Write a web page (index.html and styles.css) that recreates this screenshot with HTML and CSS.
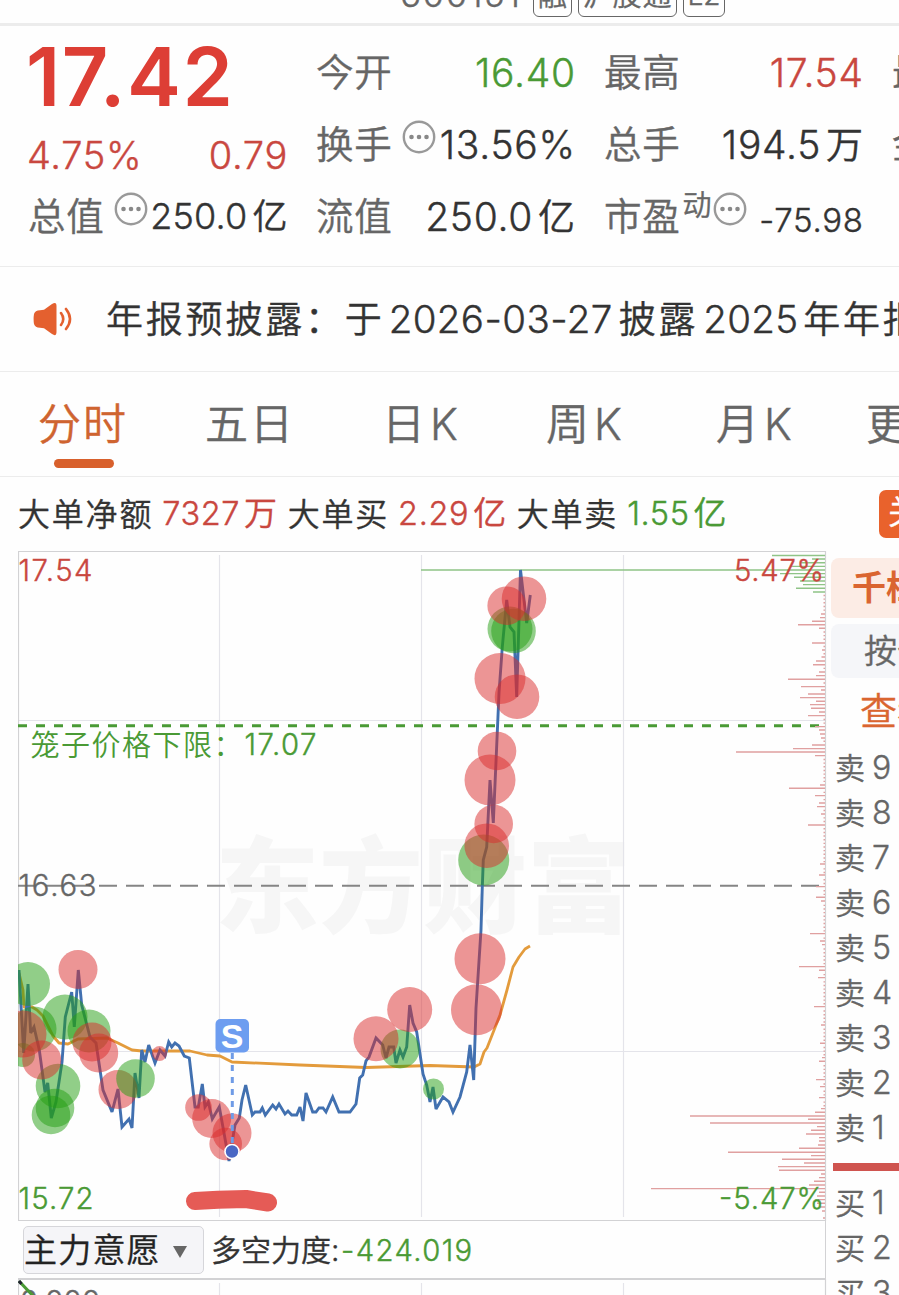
FILE: index.html
```html
<!DOCTYPE html>
<html lang="zh-CN">
<head>
<meta charset="utf-8">
<title>行情</title>
<link rel="stylesheet" href="styles.css">
</head>
<body>
<div class="screen">
  <header class="topbar">
    <span class="code">600151</span>
    <span class="tag">融</span>
    <span class="tag">沪股通</span>
    <span class="tag tag-l2">L2</span>
  </header>

  <section class="quote">
    <div class="col">
      <div class="price">17.42</div>
      <div class="change"><span>4.75%</span><span>0.79</span></div>
      <div class="cell small"><span class="label">总值</span><svg class="info" viewBox="0 0 34 34"><circle cx="17" cy="17" r="15.2"/><path d="M9.500 17h.01M17 17h.01M24.500 17h.01"/></svg><span class="value">250.0<i>亿</i></span></div>
    </div>
    <div class="col">
      <div class="cell"><span class="label">今开</span><span class="value green">16.40</span></div>
      <div class="cell"><span class="label">换手</span><svg class="info" viewBox="0 0 34 34"><circle cx="17" cy="17" r="15.2"/><path d="M9.500 17h.01M17 17h.01M24.500 17h.01"/></svg><span class="value">13.56%</span></div>
      <div class="cell"><span class="label">流值</span><span class="value">250.0<i>亿</i></span></div>
    </div>
    <div class="col">
      <div class="cell"><span class="label">最高</span><span class="value red">17.54</span></div>
      <div class="cell"><span class="label">总手</span><span class="value">194.5<i>万</i></span></div>
      <div class="cell pe"><span class="label">市盈</span><span class="sup">动</span><svg class="info" viewBox="0 0 34 34"><circle cx="17" cy="17" r="15.2"/><path d="M9.500 17h.01M17 17h.01M24.500 17h.01"/></svg><span class="value">-75.98</span></div>
    </div>
    <div class="col">
      <div class="cell"><span class="label">最低</span></div>
      <div class="cell"><span class="label">金额</span></div>
    </div>
  </section>

  <section class="notice">
    <svg class="horn" viewBox="0 0 40 34"><path class="body" d="M1 12q1-3.500 6-3.800l4-.4 8-5.800q4.500-3 4.500 2v26q0 5-4.500 2l-8-5.800-4-.4q-5-.3-6-3.800-.8-5 0-10z"/><path class="wave" d="M28 11q4.500 6 0 12M33 7q8 10 0 20"/></svg>
    <p><b>年报预披露：</b><b class="gap">于</b><span class="date">2026-03-27</span><b>披露</b><span class="year">2025</span><b>年年报</b></p>
  </section>

  <nav class="tabs">
    <a class="on">分时</a><a>五日</a><a>日<em>K</em></a><a>周<em>K</em></a><a>月<em>K</em></a><a>更多</a>
  </nav>

  <section class="orders">
    <b>大单净额</b><span class="red">7327<i>万</i></span><b>大单买</b><span class="red">2.29<i>亿</i></span><b>大单卖</b><span class="green">1.55<i>亿</i></span>
    <div class="close-btn">关</div>
  </section>

  <main class="market">
    <div class="charts">
      <svg class="chart" viewBox="18 551 809 670">
        <text class="mark" x="215" y="925" textLength="416">东方财富</text>
        <path class="grid" d="M219.500 555V1217M421.500 555V1217M623.500 555V1217M19 720.500H825M19 1051.500H825"/>
        <path class="frame" d="M825.500 551.500H18.500V1220.500H825.500V551"/>
        <path class="limit" d="M18 725.800H820"/>
        <path class="base" d="M18 885.800H820"/>
        <g class="bars" id="bars"></g>
        <path class="avg" d="M19 973L23 990L24 1007L32 1007L37 1010L43 1016L53 1036L59 1043L68 1044L78 1039L107 1038L118 1043L132 1050L142 1051L190 1051L207 1055L220 1056L232 1062L300 1065L366 1067.500L430 1065.500L474 1067L480 1064L484 1052L487 1048L500 1015L507 990L513 967L519 957L525 949L530 946"/>
        <path class="line" d="M19 970L23.700 1053L28 984L30.700 1033L34 1027L39.300 1050L45 1092L47.700 1083L51.300 1118L56 1102L62 1062L65.300 1017L71.700 992L74.300 1027L78.300 970L81.700 1005L90 1037L96 1043L103 1090L112 1112L118 1089L122 1127L129 1119L132 1128L135 1073L139 1098L141.700 1050L145 1062L148.700 1045L155 1063L160 1050L165 1056L168.700 1042L171.700 1047L175 1043L179 1046L184.300 1056L189.300 1058L195 1107L198.300 1107L202.300 1084L205 1107L208.300 1102L212.300 1119L219.300 1107L224 1133L229 1161L235 1125L239.300 1118L242 1100L245.700 1085L252.300 1115L255 1112L260 1112L262.300 1108L265.300 1115L272.700 1105L276 1109L279 1104L285 1114L288 1111L291.700 1115L296.700 1115L300 1107L303 1121L306 1093L312.700 1112L316 1112L319 1108L323 1108L326 1112L332.700 1097L339 1112L350 1112L356 1104L359.700 1078L362.700 1075L366 1061L369 1057L376 1038L382.700 1045L386 1058L389 1047L393.700 1047L396 1063L400 1050L403 1057L406.700 1047L409.700 1005L413 1023L416.700 1032L423 1074L426.700 1085L430 1102L433 1087L436 1109L443 1097L449 1102L453 1112L460 1097L466.700 1072L470 1045L473.700 1080L476 1008L481 930L482.300 887L483.300 860L486.700 847L490 780L493.300 823L497.300 732L499 693L502.300 647L506.700 600L510 627L514 632L516.700 697L520.500 570L526.700 623L530.300 595"/>
        <g class="g">
          <circle cx="28" cy="984" r="22"/><circle cx="65" cy="1017" r="22.500"/><circle cx="89" cy="1031" r="21.500"/><circle cx="34" cy="1029" r="22.500"/><circle cx="23" cy="1055" r="12"/><circle cx="58" cy="1086" r="22.300"/><circle cx="55" cy="1108" r="19.300"/><circle cx="51" cy="1115" r="19.300"/><circle cx="400" cy="1049" r="19.500"/><circle cx="433.500" cy="1089" r="10.500"/><circle cx="510" cy="629" r="22.500"/><circle cx="513.500" cy="631" r="22.300"/><circle cx="483.700" cy="860" r="25.500"/>
        </g>
        <g class="r">
          <circle cx="78" cy="969.500" r="19.500"/><circle cx="23" cy="1034" r="23.500"/><circle cx="41.700" cy="1060" r="19.500"/><circle cx="92" cy="1042" r="19.500"/><circle cx="98.700" cy="1053" r="19.500"/><circle cx="118" cy="1089.500" r="19.500"/><circle cx="159.500" cy="1053.500" r="7.500"/><circle cx="198.500" cy="1107.500" r="13.300"/><circle cx="211.700" cy="1118.500" r="19.500"/><circle cx="232" cy="1133" r="19.500"/><circle cx="225.700" cy="1144" r="16.300"/><circle cx="376" cy="1038.700" r="22.500"/><circle cx="409.700" cy="1009.500" r="22.500"/><circle cx="480" cy="958.700" r="25.500"/><circle cx="476.500" cy="1009.700" r="25.500"/><circle cx="506.700" cy="605.700" r="19.300"/><circle cx="524" cy="598.700" r="22.300"/><circle cx="500" cy="678.500" r="25.500"/><circle cx="517" cy="696.700" r="22.300"/><circle cx="497" cy="751" r="19.300"/><circle cx="490" cy="780" r="25.500"/><circle cx="493.700" cy="824" r="19.300"/><circle cx="486.700" cy="845.700" r="22.300"/>
        </g>
        <g class="g"><circle cx="135.500" cy="1078.500" r="19.300"/></g>
        <path class="drop" d="M232.300 1053V1144"/>
        <circle class="dot" cx="232" cy="1151.500" r="7"/>
        <rect class="badge" x="215.500" y="1019" width="33.500" height="33.500" rx="5"/>
        <text class="s" x="232.200" y="1048" text-anchor="middle">S</text>
        <path class="stroke" d="M195 1201L218 1199.700L246 1199L268 1202.500"/>
        <text class="lab red" x="18.500" y="581" textLength="74">17.54</text>
        <text class="lab gray" x="18.500" y="895.500" textLength="78">16.63</text>
        <text class="lab green" x="18.500" y="1209" textLength="75">15.72</text>
        <text class="lab red" x="734" y="581" textLength="90">5.47%</text>
        <text class="lab green" x="719" y="1209" textLength="105">-5.47%</text>
        <text class="cn green" x="30.500" y="755.500" textLength="212">笼子价格下限：</text>
        <text class="lab green" x="244.500" y="755" textLength="72">17.07</text>
      </svg>
      <div class="toolbar">
        <div class="select">主力意愿<svg viewBox="0 0 14 12"><path d="M0 0H14L7 12Z"/></svg></div>
        <span class="metric">多空力度:</span><span class="force green">-424.019</span>
      </div>
      <svg class="sub" viewBox="18 1278 809 17">
        <path class="edge" d="M18 1279H826"/>
        <path class="frame" d="M18.500 1279V1295M825.500 1279V1295"/>
        <path class="grid" d="M219.500 1283V1295M421.500 1283V1295M623.500 1283V1295"/>
        <text class="lab gray" x="20" y="1312" textLength="80">0.000</text>
        <path class="diag" d="M19 1281L34 1297"/>
        <path class="tick" d="M19 1281L21.500 1284"/>
      </svg>
    </div>
    <aside class="book">
      <div class="btn hot">千档</div>
      <div class="btn">按价</div>
      <div class="link">查看</div>
      <ul>
        <li>卖<span>9</span></li><li>卖<span>8</span></li><li>卖<span>7</span></li><li>卖<span>6</span></li><li>卖<span>5</span></li><li>卖<span>4</span></li><li>卖<span>3</span></li><li>卖<span>2</span></li><li>卖<span>1</span></li>
      </ul>
      <div class="split"></div>
      <ul>
        <li>买<span>1</span></li><li>买<span>2</span></li><li>买<span>3</span></li>
      </ul>
    </aside>
  </main>
</div>
<script src="chart.js"></script>
</body>
</html>
```
FILE: styles.css
```css
* { box-sizing: border-box; margin: 0; padding: 0; }
body { background: #fefefe; font-family: Inter, "Noto Sans CJK SC", sans-serif; font-weight: 350; color: #333; -webkit-text-stroke: .4px currentColor; }
i, em { font-style: normal; }
b, i { font-weight: 350; font-family: "Noto Sans CJK SC", sans-serif; line-height: 1; }
.red { color: #c9473f; fill: #c9473f; }
.green { color: #4a9a35; fill: #4a9a35; }
.gray { color: #666; fill: #666; }
.screen { width: 899px; height: 1295px; overflow: hidden; display: flex; flex-direction: column; background: #fefefe; }

.topbar { height: 26px; flex: none; border-bottom: 3px solid #ececec; display: flex; align-items: flex-end; padding: 0 0 6px 400px; gap: 4px; color: #666; overflow: hidden; }
.code { font-size: 35px; line-height: 36px; letter-spacing: 1.500px; width: 129px; margin-bottom: 5px; white-space: nowrap; }
.tag { flex: none; height: 36px; width: 39px; border: 1.500px solid #666; border-radius: 6px; font-size: 29px; line-height: 27px; text-align: center; }
.tag:nth-child(3) { width: 99px; letter-spacing: 1px; margin-left: 2px; }
.tag-l2 { width: 42px; font-size: 28px; margin-left: 2px; }

.quote { height: 241px; flex: none; border-bottom: 1px solid #ececec; padding: 10px 0 0 28px; display: flex; gap: 29px; overflow: hidden; }
.col { width: 259px; flex: none; display: flex; flex-direction: column; }
.cell { height: 72px; display: flex; align-items: center; white-space: nowrap; }
.label { font-size: 37.500px; color: #666; letter-spacing: .8px; padding-bottom: 5px; }
.value { margin-left: auto; font-size: 39px; letter-spacing: .7px; margin-right: -.7px; }
.value i { font-size: 37px; margin-left: 5px; }
.small .value { font-size: 36px; letter-spacing: .2px; }
.small .value i { font-size: 35px; }
.pe .value { font-size: 33px; padding-top: 8px; }
.info { width: 34px; height: 34px; margin: 0 0 15px 9px; fill: none; stroke: #999; stroke-width: 2.400; flex: none; }
.info path { stroke: #888; stroke-width: 4.600; stroke-linecap: round; }
.sup { font-size: 29px; color: #666; margin: 0 0 26px 2px; }
.pe .info { margin-left: 1px; }
.price { height: 80px; line-height: 82px; font-size: 81px; font-weight: 600; color: #dd3e35; letter-spacing: 1.500px; margin-left: -2px; -webkit-text-stroke: 0; }
.change { height: 64px; display: flex; justify-content: space-between; align-items: center; padding-top: 14px; font-size: 38px; color: #c9473f; letter-spacing: .7px; margin: 0 -1px; }

.notice { height: 105px; flex: none; border-bottom: 1px solid #ececec; display: flex; align-items: center; padding-left: 33px; overflow: hidden; }
.horn { width: 40px; height: 34px; flex: none; margin-right: 33px; fill: #e4602f; }
.wave { fill: none; stroke: #e4602f; stroke-width: 2.600; stroke-linecap: round; }
.notice p { display: flex; align-items: center; white-space: nowrap; font-size: 38.500px; }
.notice b { font-size: 37px; letter-spacing: 2.800px; padding-bottom: 4px; }
.notice .gap { margin: 0 4px 0 0; }
.date { width: 230px; letter-spacing: .4px; }
.year { width: 100px; margin-left: 5px; letter-spacing: .3px; }

.tabs { height: 105px; flex: none; border-bottom: 1px solid #ececec; position: relative; display: grid; grid-template-columns: 167px 177px 164px 170px 150px 90px; padding: 0 0 7px 38px; align-items: center; font-size: 43px; color: #666; }
.tabs a { white-space: nowrap; letter-spacing: 2px; }
.tabs em { margin-left: 3px; }
.tabs .on { color: #cf6430; }
.tabs .on::after { content: ""; position: absolute; left: 54px; bottom: 8px; width: 60px; height: 9px; border-radius: 5px; background: #d8602c; }

.orders { height: 74px; flex: none; display: flex; align-items: center; padding: 0 0 2px 18px; font-size: 32.500px; white-space: nowrap; overflow: hidden; }
.orders b { font-size: 32px; letter-spacing: 1.800px; padding-bottom: 3px; }
.orders span { margin: 0 10px 0 9px; letter-spacing: .6px; }
.orders i { font-size: 33px; margin-left: 4px; }
.close-btn { margin: 2px 0 0 auto; width: 20px; height: 48px; flex: none; background: #e9622c; border-radius: 7px 0 0 7px; color: #fff; line-height: 44px; padding-left: 9px; font-size: 33px; overflow: hidden; }

.market { display: flex; flex: none; height: 744px; }
.charts { width: 827px; padding-left: 18px; flex: none; display: flex; flex-direction: column; }
.chart { width: 809px; height: 670px; display: block; }
.sub { width: 809px; height: 17px; display: block; }
.chart path, .sub path { fill: none; }
.grid { stroke: #e4e4ea; stroke-width: 1.200; }
.frame { stroke: #d2d2d4; stroke-width: 1.200; }
.edge { stroke: #d2d2d4; stroke-width: 2; }
.mark { font: 900 104px "Noto Sans CJK SC"; fill: #f6f6f6; -webkit-text-stroke: 0; }
.limit { stroke: #4a9a35; stroke-width: 3; stroke-dasharray: 9 9; }
.base { stroke: #858585; stroke-width: 2; stroke-dasharray: 18 9; }
.avg { stroke: #e39b3c; stroke-width: 2.800; stroke-linejoin: round; }
.line { stroke: #4170b0; stroke-width: 2.900; stroke-linejoin: miter; stroke-miterlimit: 3; }
.g { fill: rgba(36, 158, 18, .5); }
.r { fill: rgba(217, 44, 44, .5); }
.drop { stroke: #6f9be6; stroke-width: 3; stroke-dasharray: 6 6; }
.dot { fill: #4a67c4; stroke: #fff; stroke-width: 1.600; }
.badge { fill: #6d9df0; }
.s { font: 700 34px "Liberation Sans"; fill: #fff; -webkit-text-stroke: 0; }
.stroke { stroke: #e55b56; stroke-width: 18; stroke-linecap: round; stroke-linejoin: round; }
.lab { font-size: 29.300px; stroke: currentColor; stroke-width: .4; }
.cn { font-size: 29px; }
.bars { stroke-width: 1.400; }
.up { stroke: #e0a0a0; }
.down { stroke: #8fc487; }
.diag { stroke: #4a9a35; stroke-width: 3; }
.tick { stroke: #223; stroke-width: 3; }

.toolbar { height: 57px; flex: none; display: flex; align-items: center; padding: 1px 0 0 5px; border-right: 1px solid #d2d2d4; margin-right: 1px; }
.select { width: 181px; height: 48px; border: 1.500px solid #d6d6da; border-radius: 5px; background: #f5f5f8; font-size: 33px; line-height: 47px; letter-spacing: 1.200px; white-space: nowrap; color: #222; }
.select svg { width: 14px; height: 12px; margin-left: 12px; vertical-align: 4px; fill: #666; }
.metric { font-size: 30px; margin-left: 7px; padding-bottom: 4px; white-space: nowrap; width: 130px; }
.force { font-size: 29.300px; letter-spacing: 1.400px; }

.book { flex: 1; min-width: 0; padding: 7px 0 0 4px; overflow: hidden; color: #666; white-space: nowrap; }
.btn { height: 54px; line-height: 54px; border-radius: 8px 0 0 8px; background: #f5f6f9; padding-left: 33px; font-size: 33px; margin-bottom: 6px; }
.hot { height: 60px; line-height: 60px; background: #fcece5; color: #da6530; font-weight: 700; padding-left: 21px; font-size: 34px; -webkit-text-stroke: 0; }
.link { height: 61px; line-height: 56px; font-size: 37px; color: #da6530; padding-left: 29px; }
.book ul { list-style: none; font-family: "Noto Sans CJK SC", sans-serif; line-height: 1; }
.book li { height: 45px; display: flex; align-items: center; font-size: 30px; padding: 0 0 4px 4px; }
.book li span { font-family: Inter, sans-serif; font-size: 32px; margin-left: 7px; padding-top: 4px; }
.split { height: 8px; background: #cf544f; margin: 13px 0 9px 2px; }
```
FILE: chart.js
```js
// Volume-at-price rows: [y, length]; rows not listed get a short tick.
const rows = [[614,4],[617.6,5],[621.3,13],[624.8,27],[628.3,6],[643,13],[650,3],[657,3.5],[661,9],[664.7,12],[672,6],[675.6,9],[679.3,37],[686.6,24],[690,4],[694,17],[697.6,25],[701.3,9],[704.6,15],[708.3,14],[712,6],[715.6,17],[726.6,10],[730,6],[734,5],[738,4],[745,13],[748.6,32],[752,89],[755.6,10],[785,5],[788.3,36],[795.6,10],[803,6],[806.6,8],[814,4],[825,17],[864,5],[875,6],[886.6,9],[897.3,9],[901,4],[933.6,15],[941,5],[944.6,3],[966.6,26],[970.3,6],[977.6,7],[1006.6,11],[1025,4],[1043.3,5],[1057.6,3],[1061.3,6],[1079.6,9],[1086.6,5],[1097.6,6],[1108.6,4],[1112.3,10],[1116,135],[1119.3,17],[1123,115],[1126.6,8],[1130.3,14],[1134,19],[1137.6,6],[1141,6],[1145,7],[1148.3,26],[1152.3,97],[1155.6,14],[1159.3,43],[1163,21],[1166.6,47],[1170.3,46],[1174,4],[1177.6,6],[1181.3,11],[1185,16],[1188.6,174],[1192.3,6],[1196,8],[1199.6,7],[1203.3,8],[1207,5],[1211,3],[1218,2]];
const sells = [[555.5,53],[559,13],[562.7,24],[566.4,35],[570,404],[573.6,45],[577.3,31],[581,25],[584.6,22],[588.2,29],[592,12]];
for (let y = 595.5; y < 1110; y += 3.645) {
  if (!rows.some(r => Math.abs(r[0] - y) < 2.4)) rows.push([y, 1.5]);
}
const seg = list => list.map(([y, n]) => `M${825 - n} ${y}H825`).join("");
document.getElementById("bars").innerHTML =
  `<path class="up" d="${seg(rows)}"/><path class="down" d="${seg(sells)}"/>`;
```
